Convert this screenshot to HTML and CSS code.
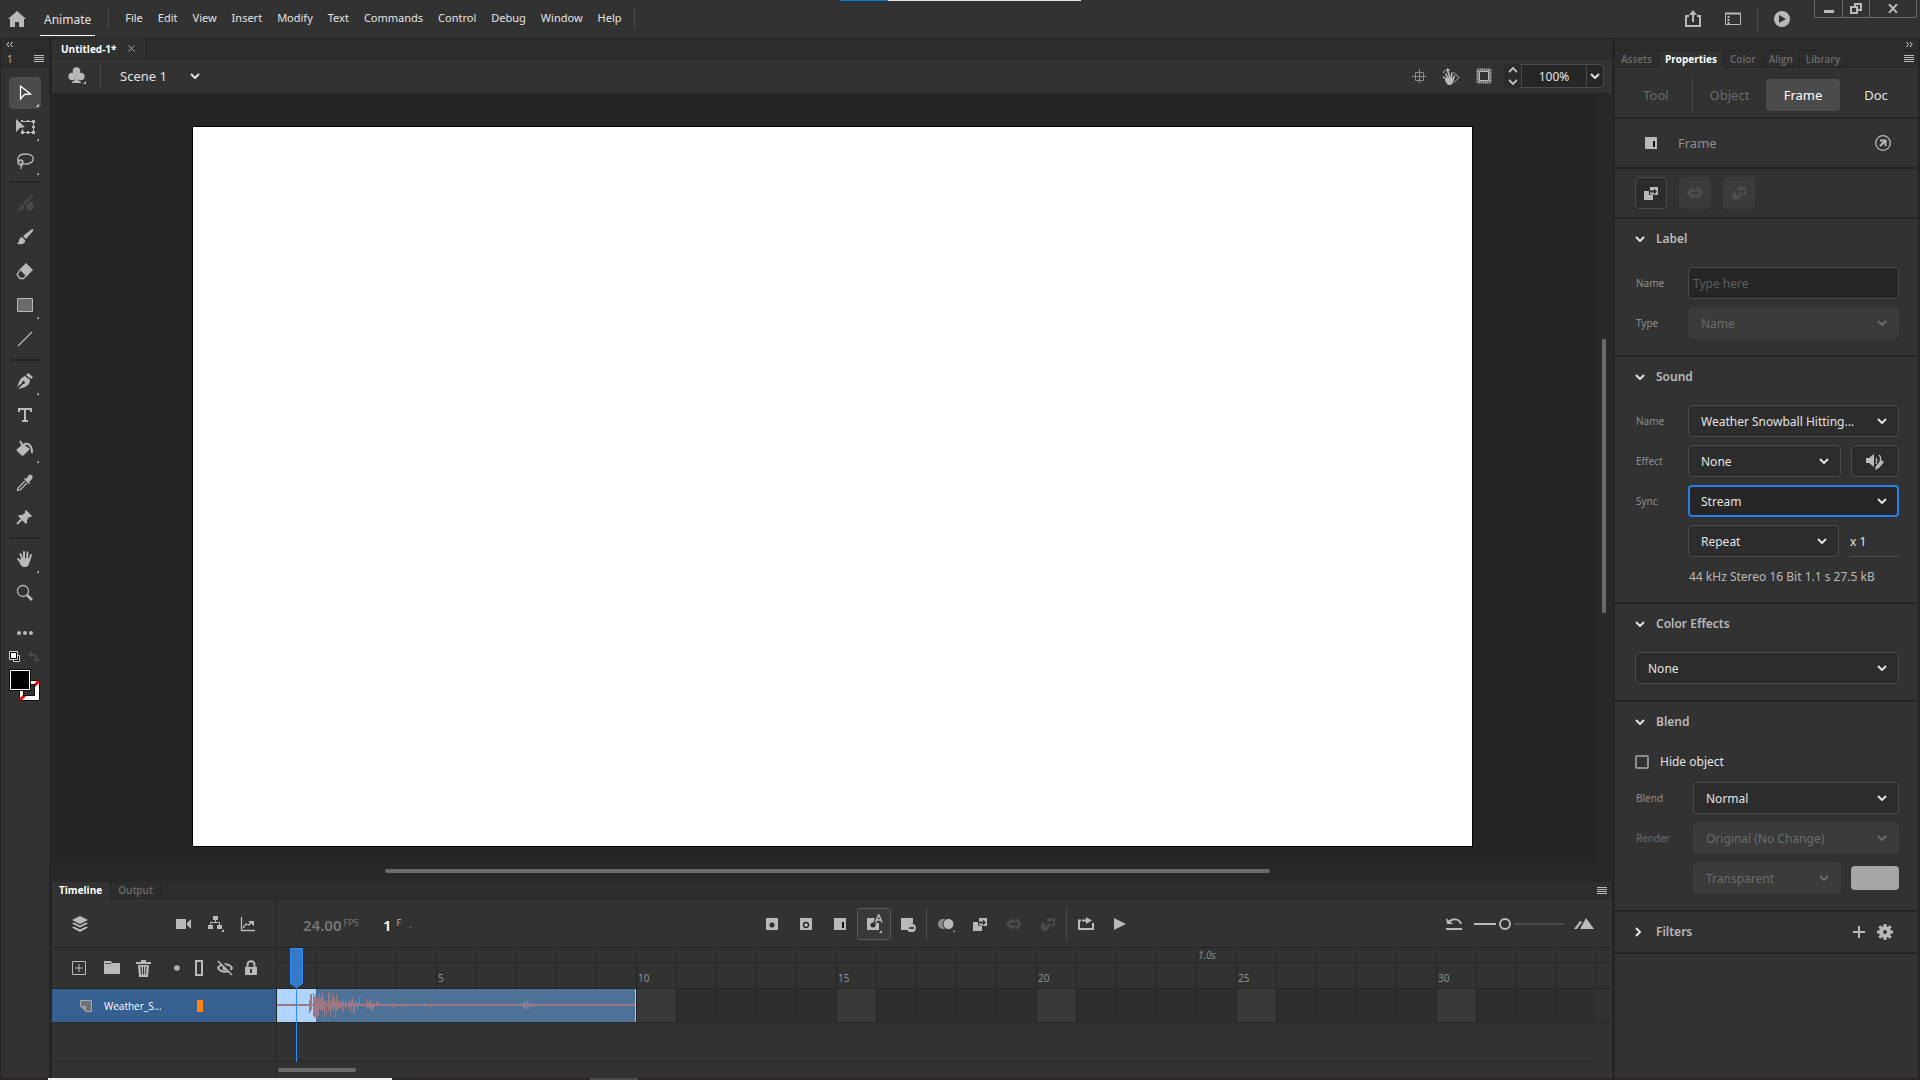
FILE: index.html
```html
<!DOCTYPE html>
<html lang="en">
<head>
<meta charset="utf-8">
<title>Untitled-1* - Animate</title>
<link rel="stylesheet" href="styles.css">
</head>
<body>
<svg class="defs" aria-hidden="true">
  <symbol id="chevron" viewBox="0 0 10 6"><path d="M1 1l4 4 4-4" fill="none" stroke="currentColor" stroke-width="2"/></symbol>
  <symbol id="burger" viewBox="0 0 10 7"><path d="M0 .5h10M0 2.5h10M0 4.5h10M0 6.5h10" stroke="currentColor"/></symbol>
  <symbol id="classic-tween" viewBox="0 0 16 16"><path fill="currentColor" d="M1 6h5v4h4v5H1z"/><path fill="currentColor" fill-rule="evenodd" d="M7 2h8v8h-4V9.500H7V7.500h4v2l3-3-3-3v2H7z"/></symbol>
  <symbol id="motion-tween" viewBox="0 0 16 16"><path fill="currentColor" fill-rule="evenodd" d="M5 2L0 8l5 6 3-3 3 3 5-6-5-6-3 3zM5 7h4V5l3 3-3 3V9H7v2L4 8l1-1z"/></symbol>
  <symbol id="shape-tween" viewBox="0 0 16 16"><path fill="currentColor" d="M5 6v4h4.600A4.500 4.500 0 1 1 5 6z"/><path fill="currentColor" fill-rule="evenodd" d="M7 2h8v8h-4V9.500H7V7.500h4v2l3-3-3-3v2H7z"/></symbol>
  <symbol id="frame-span" viewBox="0 0 16 16"><path fill="currentColor" fill-rule="evenodd" d="M2 2h12v12H2zM10 6h2v6h-2z"/><path fill="#111" d="M10 6h2v6h-2z"/></symbol>
</svg>

<div class="desktop-strip"></div>

<header class="app-bar">
  <button class="icon-btn home" aria-label="Home"><svg width="18" height="16" viewBox="0 0 18 16"><path fill="currentColor" d="M9 0l9 8h-2v8h-5v-5H7v5H2V8H0z"/></svg></button>
  <a class="app-name" href="#">Animate</a>
  <nav class="menu" aria-label="Main menu">
    <button>File</button><button>Edit</button><button>View</button><button>Insert</button><button>Modify</button><button>Text</button><button>Commands</button><button>Control</button><button>Debug</button><button>Window</button><button>Help</button>
  </nav>
  <div class="app-actions">
    <button class="icon-btn" aria-label="Share"><svg width="18" height="18" viewBox="0 0 18 18"><path d="M5 6H2v10h14V6h-3M9 12V2" fill="none" stroke="currentColor" stroke-width="2"/><path fill="currentColor" d="M9 0l4 5H5z"/></svg></button>
    <button class="icon-btn" aria-label="Workspace"><svg width="18" height="14" viewBox="0 0 18 14"><path d="M1.500 1.500h15v11h-15z" fill="none" stroke="currentColor"/><path d="M1 1.500h16" stroke="currentColor" stroke-width="2"/><path d="M4.500 4v8" stroke="currentColor" stroke-width="2" stroke-dasharray="2 1"/></svg></button>
    <span class="bar-rule"></span>
    <button class="icon-btn" aria-label="Test movie"><svg width="16" height="16" viewBox="0 0 16 16"><path fill="currentColor" fill-rule="evenodd" d="M8 0a8 8 0 1 0 0 16A8 8 0 0 0 8 0zM5 4l7 4-7 4z"/></svg></button>
  </div>
  <div class="window-buttons">
    <button aria-label="Minimize"><svg width="10" height="10" viewBox="0 0 10 10"><path d="M0 7.500h10" stroke="currentColor" stroke-width="3"/></svg></button>
    <button aria-label="Restore"><svg width="12" height="11" viewBox="0 0 12 11"><path d="M5 4V1h6v6H8M1 4h6v6H1z" fill="none" stroke="currentColor" stroke-width="2"/></svg></button>
    <button aria-label="Close"><svg width="10" height="9" viewBox="0 0 10 9"><path d="M1 0l8 9M9 0L1 9" stroke="currentColor" stroke-width="2"/></svg></button>
  </div>
</header>

<div class="workspace">
  <aside class="tools">
    <div class="collapse left"><svg width="7" height="5" viewBox="0 0 7 5"><path d="M3 0L1 2.500 3 5M6.500 0l-2 2.500 2 2.500" fill="none" stroke="currentColor"/></svg></div>
    <div class="tools-tab"><span>1</span><svg width="10" height="7"><use href="#burger"/></svg></div>
    <div class="tool-list">
      <button class="tool more active" aria-label="Selection"><svg width="20" height="20" viewBox="0 0 20 20"><path d="M5.500 3v13l4-4.500 6-.5z" fill="none" stroke="#fff" stroke-width="1.300"/></svg></button>
      <button class="tool more" aria-label="Free transform"><svg width="20" height="20" viewBox="0 0 20 20"><path fill="currentColor" d="M1 2l9 8-5 1-4 4z"/><path d="M7 4.500h11.500v11H7.500V12" fill="none" stroke="currentColor"/><path fill="currentColor" d="M6 3h2v2H6zM12 3h2v2h-2zM17 3h3v3h-3zM17 9h3v2h-3zM17 14h3v3h-3zM12 14h2v3h-2zM6 14h3v3H6z"/></svg></button>
      <button class="tool more" aria-label="Lasso"><svg width="18" height="18" viewBox="0 0 18 18"><g fill="none" stroke="currentColor" stroke-width="1.300"><path d="M4 11C-1 7 3 2 9 2s9 2 8 6-8 5-12 3"/><circle cx="4.500" cy="10.500" r="2.500"/><path d="M5 11c3 2-1 3 0 6"/></g></svg></button>
      <hr>
      <button class="tool" disabled aria-label="Fluid brush"><svg width="18" height="18" viewBox="0 0 18 18"><path fill="currentColor" d="M16 1L7 9l2 2 8-9zM6 10c-3 0-2 4-5 6 4 1 8 0 7-4zM10 11l5-4c3 3 3 6 2 8s-6 2-7-1z"/></svg></button>
      <button class="tool" aria-label="Brush"><svg width="18" height="18" viewBox="0 0 18 18"><path fill="currentColor" d="M16 1c2 0 1 2 1 2l-7 8-3-3zM6 9l3 3c1 4-4 5-8 4 3-2 1-6 5-7z"/></svg></button>
      <button class="tool" aria-label="Eraser"><svg width="18" height="18" viewBox="0 0 18 18"><path fill="currentColor" d="M10 1l7 7-6 6-7-7z"/><path d="M4.500 7.500l6 6-3 3H4l-3-4z" fill="none" stroke="currentColor" stroke-width="1.300"/></svg></button>
      <button class="tool more" aria-label="Rectangle"><svg width="18" height="16" viewBox="0 0 18 16"><path d="M1.500 1.500h15v13h-15z" fill="#6b6b6b" stroke="currentColor"/></svg></button>
      <button class="tool" aria-label="Line"><svg width="18" height="18" viewBox="0 0 18 18"><path d="M2 16L16 2" stroke="currentColor" stroke-width="1.300"/></svg></button>
      <hr>
      <button class="tool more" aria-label="Pen"><svg width="18" height="18" viewBox="0 0 18 18"><path fill="currentColor" d="M12 1l5 4-2 2-5-4zM9 4l5 4c0 4-3 7-8 8l-4 1 5-5a1.500 1.500 0 1 0-1-1l-5 4 2-5c1-3 3-5 6-6z"/></svg></button>
      <button class="tool" aria-label="Text"><svg width="16" height="16" viewBox="0 0 16 16"><path d="M2 5V2h12v3M8 2v12M5 14h6" fill="none" stroke="currentColor" stroke-width="2"/></svg></button>
      <button class="tool more" aria-label="Paint bucket"><svg width="18" height="18" viewBox="0 0 18 18"><path fill="currentColor" d="M7 4l7 5-6 6c-1 1-2 1-3 0l-4-4c-1-1 0-2 0-2z"/><path d="M4 1l4 7M7 5c5-3 9 0 9 8" fill="none" stroke="currentColor" stroke-width="2"/></svg></button>
      <button class="tool" aria-label="Eyedropper"><svg width="18" height="18" viewBox="0 0 18 18"><path fill="currentColor" d="M13 1c2-1 5 1 3 4l-3 3 1 1-1 1-5-5 1-1 1 1z"/><path d="M9 7l-7 7-.5 2.500L4 16l7-7" fill="none" stroke="currentColor" stroke-width="1.300"/></svg></button>
      <button class="tool" aria-label="Asset warp"><svg width="18" height="18" viewBox="0 0 18 18"><path fill="currentColor" d="M10 2l6 6-1 1h-2l-2 3v3l-1 1-8-8 1-1h3l3-2V3z"/><path d="M6 11l-5 5" stroke="currentColor" stroke-width="2"/></svg></button>
      <hr>
      <button class="tool more" aria-label="Hand"><svg width="18" height="18" viewBox="0 0 18 18"><path d="M4.500 4l2 6M8 2v8M11.500 2.500L11 10M15 5l-2 6M2 9l4 4" fill="none" stroke="currentColor" stroke-width="2" stroke-linecap="round"/><path fill="currentColor" d="M5 9l9-1c0 5-2 9-4 9H7c-2-1-4-5-4-6z"/></svg></button>
      <button class="tool" aria-label="Zoom"><svg width="18" height="18" viewBox="0 0 18 18"><circle cx="7" cy="7" r="5.500" fill="none" stroke="currentColor" stroke-width="1.300"/><path d="M11 11l5 5" stroke="currentColor" stroke-width="2.500"/></svg></button>
      <button class="tool extra" aria-label="Edit toolbar"><svg width="18" height="6" viewBox="0 0 18 6"><g fill="currentColor"><circle cx="3" cy="3" r="2"/><circle cx="9" cy="3" r="2"/><circle cx="15" cy="3" r="2"/></g></svg></button>
      <div class="swap-row">
        <button class="icon-btn" aria-label="Default colors"><svg width="12" height="12" viewBox="0 0 12 12"><path d="M4.500 4.500h6v6h-6z" fill="#000" stroke="#ccc"/><path d="M1.500 1.500h6v6h-6z" fill="#fff" stroke="#000"/><path d="M.5.5h8v8h-8z" fill="none" stroke="#ccc"/></svg></button>
        <button class="icon-btn dim" aria-label="Swap colors"><svg width="12" height="12" viewBox="0 0 12 12"><path d="M2 3.500c5 0 7 1 7 6" fill="none" stroke="currentColor" stroke-width="2"/><path fill="currentColor" d="M4 0v7L0 3.500zM5 8h7l-3.500 4z"/></svg></button>
      </div>
      <svg class="color-wells" width="32" height="34" viewBox="0 0 32 34"><path fill="#fff" stroke="#111" d="M10.500 11.500h20v20h-20z"/><path d="M11 31L30 12" stroke="#f00" stroke-width="3"/><path fill="#323232" stroke="#111" d="M14.500 15.500h11v11h-11z"/><path fill="#000" stroke="#111" d="M.5.500h21v21H.5z"/><path fill="#000" stroke="#fff" d="M1.500 1.500h19v19h-19z"/></svg>
    </div>
  </aside>

  <main class="document">
    <div class="doc-tabs"><div class="doc-tab"><span>Untitled-1*</span><button aria-label="Close document"><svg width="7" height="7" viewBox="0 0 7 7"><path d="M.5.500l6 6M6.500.5l-6 6" stroke="currentColor"/></svg></button></div></div>
    <div class="scene-bar">
      <button class="icon-btn club" aria-label="Edit symbols"><svg width="18" height="18" viewBox="0 0 18 18"><g fill="currentColor"><circle cx="8.500" cy="4" r="3.800"/><circle cx="4.200" cy="9.500" r="3.800"/><circle cx="12.800" cy="9.500" r="3.800"/><path d="M8 6h1l1 7 3 2v1H4v-1l3-2zM18 14v3h-3z"/></g></svg></button>
      <div class="scene-pick"><select aria-label="Scene"><option>Scene 1</option></select><svg width="10" height="6"><use href="#chevron"/></svg></div>
      <div class="stage-tools">
        <button class="icon-btn soft" aria-label="Center stage"><svg width="14" height="14" viewBox="0 0 14 14"><path d="M7.500 0v14M0 7.500h14M3.500 3.500h8v8h-8z" fill="none" stroke="currentColor"/></svg></button>
        <button class="icon-btn" aria-label="Rotate stage"><svg width="18" height="17" viewBox="0 0 18 17"><path d="M4 6l2 5M6.500 4.500L7.500 10M10 5l-1 6M1.500 9L5 12M12.500 8L11 11" stroke="currentColor" stroke-width="1.600" stroke-linecap="round"/><path fill="currentColor" d="M4 10h8c0 4-2 7-4 7H6c-1-1-3-4-3-5z"/><path d="M11.500 4l5.500 5.500-5 5M1.500 5c0-2 2-3 4-3" fill="none" stroke="currentColor"/><path fill="currentColor" d="M5 0l3 2-3 3z"/></svg></button>
        <button class="icon-btn" aria-label="Clip content"><svg width="16" height="16" viewBox="0 0 16 16"><path d="M2 2h12v12H2z" fill="none" stroke="#6f6f6f" stroke-width="3"/><path d="M2 2h12v12H2z" fill="none" stroke="#9a9a9a" stroke-width="3" stroke-dasharray="1 1"/><path d="M3.500 3.500h9v9h-9z" fill="#323232" stroke="#b9b9b9"/></svg></button>
        <div class="zoom-box">
          <button class="stepper" aria-label="Zoom step"><svg width="10" height="18" viewBox="0 0 10 18"><path d="M1 5l4-4 4 4M1 13l4 4 4-4" fill="none" stroke="currentColor" stroke-width="2"/></svg></button>
          <input aria-label="Zoom" value="100%">
          <button class="zoom-open" aria-label="Zoom levels"><svg width="10" height="6"><use href="#chevron"/></svg></button>
        </div>
      </div>
    </div>

    <div class="canvas">
      <div class="pasteboard"><div class="artboard"></div></div>
      <div class="track-v"><span></span></div>
      <div class="track-h"><span></span></div>
    </div>

    <section class="timeline" aria-label="Timeline">
      <div class="panel-tabs">
        <button class="on">Timeline</button><button>Output</button>
        <button class="panel-menu" aria-label="Panel menu"><svg width="10" height="7"><use href="#burger"/></svg></button>
      </div>
      <div class="tl-bar">
        <div class="tl-left">
          <button class="icon-btn layers" aria-label="Layer view"><svg width="16" height="16" viewBox="0 0 16 16"><path fill="currentColor" d="M8 0l8 4-8 4-8-4zM0 7.500L2 6.500l6 3 6-3 2 1-8 4zM0 11.500l2-1 6 3 6-3 2 1L8 16z"/></svg></button>
          <button class="icon-btn" aria-label="Add camera"><svg width="16" height="12" viewBox="0 0 16 12"><path fill="currentColor" d="M0 1h10v10H0zM11 5l4-4v10l-4-4z"/></svg></button>
          <button class="icon-btn" aria-label="Parenting view"><svg width="16" height="17" viewBox="0 0 16 17"><path fill="currentColor" d="M5 1h5v4H5zM0 10h5v4H0zM9 10h5v4H9zM16 14v3h-3z"/><path d="M7.500 5v2.500M2.500 10V7.500h9V10" fill="none" stroke="currentColor"/></svg></button>
          <button class="icon-btn" aria-label="Layer depth"><svg width="16" height="16" viewBox="0 0 16 16"><path d="M1.500 1v13.500H15M3 12l3-4 3 1 3-4" fill="none" stroke="currentColor" stroke-width="1.300"/><path fill="currentColor" d="M8 5h6v5z"/></svg></button>
        </div>
        <div class="tl-main">
          <div class="tl-time"><span class="fps">24.00<small>FPS</small></span><span class="frame-no">1<small>F</small></span><span class="tick">.</span></div>
          <div class="tl-keys">
            <button aria-label="Insert keyframe"><svg width="16" height="16" viewBox="0 0 16 16"><path fill="currentColor" d="M2 2h12v12H2z"/><circle cx="8" cy="9" r="2.500" fill="#2a2a2a"/></svg></button>
            <button aria-label="Insert blank keyframe"><svg width="16" height="16" viewBox="0 0 16 16"><path fill="currentColor" d="M2 2h12v12H2z"/><circle cx="8" cy="9" r="2.500" fill="none" stroke="#222" stroke-width="1.300"/></svg></button>
            <button aria-label="Insert frame"><svg width="16" height="16"><use href="#frame-span"/></svg></button>
            <button class="boxed" aria-label="Auto keyframe"><svg width="18" height="20" viewBox="0 0 18 20"><path fill="currentColor" d="M2 4h12v12H2z"/><circle cx="8" cy="11" r="2.500" fill="#2a2a2a"/><path fill="#3a3a3a" d="M11 0h7v11h-3l-1-2h-3l-1 2-2-1z"/><path d="M10.500 8.500L13.500 1h.5l3 7.500M12 6h4" fill="none" stroke="currentColor" stroke-width="1.500"/><path fill="currentColor" d="M17 16v3h-3z"/></svg></button>
            <button aria-label="Remove frames"><svg width="16" height="16" viewBox="0 0 16 16"><path fill="currentColor" d="M1 2h12v5l-3 1-2 3v3H1z"/><circle cx="11.500" cy="12" r="4.500" fill="currentColor"/><path d="M9 12h5" stroke="#222" stroke-width="1.500"/></svg></button>
            <i class="sep"></i>
            <button aria-label="Onion skin"><svg width="18" height="16" viewBox="0 0 18 16"><circle cx="6" cy="8" r="5" fill="#8c8c8c"/><circle cx="11.500" cy="8" r="5.500" fill="currentColor" stroke="#323232"/><path fill="currentColor" d="M18 14v2h-2z"/></svg></button>
            <button aria-label="Create classic tween"><svg width="16" height="16"><use href="#classic-tween"/></svg></button>
            <button disabled aria-label="Create motion tween"><svg width="16" height="16"><use href="#motion-tween"/></svg></button>
            <button disabled aria-label="Create shape tween"><svg width="16" height="16"><use href="#shape-tween"/></svg></button>
            <i class="sep"></i>
            <button aria-label="Loop"><svg width="18" height="16" viewBox="0 0 18 16"><path d="M4 4.500H2V13h14V7M5 4.500h6" fill="none" stroke="currentColor" stroke-width="2"/><path fill="currentColor" d="M9 1l6 3.500L9 8z"/></svg></button>
            <button aria-label="Play"><svg width="14" height="14" viewBox="0 0 14 14"><path fill="currentColor" d="M1 1l12 6-12 6z"/></svg></button>
          </div>
          <div class="tl-zoom">
            <button class="icon-btn reset" aria-label="Reset timeline zoom"><svg width="16" height="14" viewBox="0 0 16 14"><path d="M2 6c4-5 11-5 13 1" fill="none" stroke="currentColor" stroke-width="2"/><path fill="currentColor" d="M0 1l1 6h6zM0 11h16v2H0z"/></svg></button>
            <input type="range" min="0" max="100" value="32" aria-label="Timeline zoom">
            <button class="icon-btn" aria-label="Resize timeline"><svg width="20" height="12" viewBox="0 0 20 12"><path fill="currentColor" d="M12 0l8 11H6zM6 3l2 1-5 7H0z"/></svg></button>
          </div>
        </div>
      </div>
      <div class="tl-head">
        <div class="tl-left layer-tools">
          <button class="icon-btn" aria-label="New layer"><svg width="14" height="14" viewBox="0 0 14 14"><path d="M.5.500h13v13H.5zM7 3v8M3 7h8" fill="none" stroke="currentColor"/></svg></button>
          <button class="icon-btn" aria-label="New folder"><svg width="16" height="14" viewBox="0 0 16 14"><path fill="currentColor" d="M0 0h7l1 2h8v11H0z"/><path d="M1 2.500h6" stroke="#555"/></svg></button>
          <button class="icon-btn" aria-label="Delete layer"><svg width="16" height="17" viewBox="0 0 16 17"><path fill="currentColor" d="M0 2h15v2H0zM5 0h5v2H5zM2 5h11l-1 12H3z"/><path d="M5 6.500l.5 8M7.500 6.500v8M10 6.500l-.5 8" stroke="#323232"/></svg></button>
          <button class="icon-btn" aria-label="Highlight"><svg width="6" height="6" viewBox="0 0 6 6"><circle cx="3" cy="3" r="2.800" fill="currentColor"/></svg></button>
          <button class="icon-btn" aria-label="Outline"><svg width="8" height="16" viewBox="0 0 8 16"><path d="M1 1h6v14H1z" fill="none" stroke="currentColor" stroke-width="2"/></svg></button>
          <button class="icon-btn" aria-label="Hide layers"><svg width="16" height="16" viewBox="0 0 16 16"><path d="M1 8c3-5 11-5 14 0-3 5-11 5-14 0z" fill="none" stroke="currentColor" stroke-width="2"/><circle cx="8" cy="8" r="2.500" fill="currentColor"/><path d="M2 0l14 14" stroke="#323232" stroke-width="2"/><path d="M1 1l14 14" stroke="currentColor" stroke-width="1.500"/></svg></button>
          <button class="icon-btn" aria-label="Lock layers"><svg width="12" height="16" viewBox="0 0 12 16"><path fill="currentColor" fill-rule="evenodd" d="M0 7h12v8H0zM5 9v4h2V9z"/><path d="M2.500 7V5c0-5 7-5 7 0v2" fill="none" stroke="currentColor" stroke-width="2"/></svg></button>
        </div>
        <div class="ruler">
          <div class="seconds"><span>1.0s</span></div>
          <ol class="frames"><li>5</li><li>10</li><li>15</li><li>20</li><li>25</li><li>30</li></ol>
        </div>
      </div>
      <div class="tl-row">
        <div class="tl-left layer-name">
          <svg width="12" height="12" viewBox="0 0 12 12"><path d="M.5.500h11v11H6L.5 6z" fill="#6f7275" stroke="#aaa"/><path d="M0 6h6v6" fill="#9c9c9c"/></svg>
          <span>Weather_S...</span><i></i>
        </div>
        <div class="lane">
          <svg class="clip" width="359" height="33" viewBox="0 0 359 33" aria-label="Audio waveform">
            <path fill="#4e7197" d="M39 0h319v33H39z"/><path fill="#b0d4fb" d="M0 0h39v33H0z"/><path fill="#b5d66a" d="M358 0h1v33h-1z"/>
            <path stroke="#2b4a6b" d="M78 1.500h1M118 1.500h1M158 1.500h1M198 1.500h1M238 1.500h1M278 1.500h1M318 1.500h1"/>
            <path fill="#9c7985" d="M0 15h358v2H0z"/>
            <path stroke="#9c7985" d="M32.500 11v13M33.500 5v18M34.500 5v16M36.500 4v23M37.500 8v21M38.500 5v23M39.500 7v22M40.500 10v17M41.500 9v18M42.500 4v16M43.500 10v12M44.500 7v13M45.500 3v19M46.500 8v12M47.500 12v16M49.500 11v15M51.500 3v20M52.500 4v16M53.500 12v16M54.500 13v7M55.500 4v18M56.500 8v12M57.500 9v9M58.500 13v16M59.500 5v17M60.500 10v10M61.500 12v8M62.500 14v5M63.500 11v8M64.500 13v5M65.500 14v9M66.500 10v11M68.500 11v7M69.500 14v6M71.500 12v6M72.500 12v8M73.500 14v9M74.500 11v7M75.500 8v9M76.500 13v12M77.500 14v9M78.500 12v6M80.500 13v8M81.500 14v3M82.500 8v9M86.500 14v4M89.500 10v10M90.500 12v6M91.500 14v4M92.500 12v8M93.500 11v9M94.500 15v7M95.500 14v7M96.500 14v5M99.500 12v5M100.500 13v4M101.500 13v5M108.500 14v3M112.500 14v3M115.500 14v3M117.500 15v4M125.500 15v4M129.500 14v3M153.500 15v4M246.500 13v5M247.500 14v6M248.500 12v8M250.500 11v9M252.500 13v7M255.500 14v4M256.500 15v3"/>
          </svg>
        </div>
      </div>
      <div class="tl-empty"><div class="tl-left"></div></div>
      <div class="tl-scroll"><div class="tl-left"></div><span></span></div>
      <svg class="playhead" width="14" height="114" viewBox="0 0 14 114"><path fill="#377bc8" stroke="#2f8bf5" d="M.5.500h12v35l-6 4-6-4z"/><path stroke="#2f8bf5" d="M6.500 39v75"/></svg>
    </section>
  </main>

  <aside class="props">
    <div class="collapse right"><svg width="7" height="5" viewBox="0 0 7 5"><path d="M.5 0l2 2.500-2 2.500M4 0l2 2.500L4 5" fill="none" stroke="currentColor"/></svg></div>
    <div class="panel-tabs">
      <button>Assets</button><button class="on">Properties</button><button>Color</button><button>Align</button><button>Library</button>
      <button class="panel-menu" aria-label="Panel menu"><svg width="10" height="7"><use href="#burger"/></svg></button>
    </div>
    <div class="modes"><button disabled>Tool</button><button disabled>Object</button><button class="on">Frame</button><button>Doc</button></div>
    <div class="kind">
      <svg width="16" height="16"><use href="#frame-span"/></svg><span>Frame</span>
      <button class="icon-btn" aria-label="Quick share"><svg width="16" height="16" viewBox="0 0 16 16"><circle cx="8" cy="8" r="7.300" fill="none" stroke="currentColor" stroke-width="1.300"/><path d="M5 11l5-5M5 5.500h5.500V11" fill="none" stroke="currentColor" stroke-width="2"/></svg></button>
    </div>
    <div class="tweens">
      <button aria-label="Create classic tween"><svg width="16" height="16"><use href="#classic-tween"/></svg></button>
      <button disabled aria-label="Create motion tween"><svg width="16" height="16"><use href="#motion-tween"/></svg></button>
      <button disabled aria-label="Create shape tween"><svg width="16" height="16"><use href="#shape-tween"/></svg></button>
    </div>

    <section class="group">
      <h2><svg width="10" height="6"><use href="#chevron"/></svg>Label</h2>
      <div class="field"><label for="label-name">Name</label><input id="label-name" placeholder="Type here"></div>
      <div class="field"><label for="label-type">Type</label><div class="pick"><select id="label-type" disabled><option>Name</option></select><svg width="10" height="6"><use href="#chevron"/></svg></div></div>
    </section>

    <section class="group">
      <h2><svg width="10" height="6"><use href="#chevron"/></svg>Sound</h2>
      <div class="field"><label for="snd-name">Name</label><div class="pick"><select id="snd-name"><option>Weather Snowball Hitting...</option></select><svg width="10" height="6"><use href="#chevron"/></svg></div></div>
      <div class="field"><label for="snd-effect">Effect</label><div class="pick"><select id="snd-effect"><option>None</option></select><svg width="10" height="6"><use href="#chevron"/></svg></div>
        <button class="side" aria-label="Edit sound envelope"><svg width="18" height="17" viewBox="0 0 18 17"><path fill="currentColor" d="M0 5h3l5-4v13l-5-4H0zM9 17l1-4 5-6 3 2-5 6z"/><path d="M10 5c1 2 1 4 0 6M13 2c2 2 2 4 1 6" fill="none" stroke="currentColor" stroke-width="1.300"/></svg></button></div>
      <div class="field"><label for="snd-sync">Sync</label><div class="pick focus"><select id="snd-sync"><option>Stream</option></select><svg width="10" height="6"><use href="#chevron"/></svg></div></div>
      <div class="field unlabelled"><div class="pick"><select aria-label="Loop mode"><option>Repeat</option></select><svg width="10" height="6"><use href="#chevron"/></svg></div><input class="times" aria-label="Repeat count" value="x 1"></div>
      <p class="info">44 kHz Stereo 16 Bit 1.1 s 27.5 kB</p>
    </section>

    <section class="group">
      <h2><svg width="10" height="6"><use href="#chevron"/></svg>Color Effects</h2>
      <div class="field"><div class="pick"><select aria-label="Color effect"><option>None</option></select><svg width="10" height="6"><use href="#chevron"/></svg></div></div>
    </section>

    <section class="group blend">
      <h2><svg width="10" height="6"><use href="#chevron"/></svg>Blend</h2>
      <label class="check"><input type="checkbox">Hide object</label>
      <div class="field"><label for="bl-mode">Blend</label><div class="pick"><select id="bl-mode"><option>Normal</option></select><svg width="10" height="6"><use href="#chevron"/></svg></div></div>
      <div class="field"><label for="bl-render" class="off">Render</label><div class="pick"><select id="bl-render" disabled><option>Original (No Change)</option></select><svg width="10" height="6"><use href="#chevron"/></svg></div></div>
      <div class="field unlabelled"><div class="pick"><select aria-label="Background" disabled><option>Transparent</option></select><svg width="10" height="6"><use href="#chevron"/></svg></div><button class="swatch" disabled aria-label="Background color"></button></div>
    </section>

    <section class="group filters">
      <h2><svg class="shut" width="6" height="10" viewBox="0 0 6 10"><path d="M1 1l4 4-4 4" fill="none" stroke="currentColor" stroke-width="2"/></svg>Filters</h2>
      <button class="icon-btn" aria-label="Add filter"><svg width="12" height="12" viewBox="0 0 12 12"><path d="M6 0v12M0 6h12" stroke="currentColor" stroke-width="2"/></svg></button>
      <button class="icon-btn" aria-label="Filter options"><svg width="16" height="16" viewBox="0 0 16 16"><circle cx="8" cy="8" r="4" fill="none" stroke="currentColor" stroke-width="4"/><path d="M8 0v3M8 13v3M0 8h3M13 8h3M2.300 2.300l2 2M11.700 11.700l2 2M2.300 13.700l2-2M11.700 4.300l2-2" stroke="currentColor" stroke-width="3"/></svg></button>
    </section>
  </aside>
</div>

<footer class="taskbar"><i class="light"></i><i class="mid"></i></footer>
</body>
</html>
```

FILE: styles.css
```css
:root {
  --panel: #323232;
  --tabs: #2d2d2d;
  --line: #252525;
  --icon: #b9b9b9;
  --text: #e3e3e3;
  --dim: #6b6b6b;
  --edge: #4b4b4b;
}

* { box-sizing: border-box; }

body {
  margin: 0;
  height: 100vh;
  display: flex;
  flex-direction: column;
  overflow: hidden;
  background: var(--line);
  color: var(--text);
  font: 12px/16px "Noto Sans", "Open Sans", sans-serif;
}

button, input, select {
  font: inherit;
  color: inherit;
  margin: 0;
  padding: 0;
  border: 0;
  background: none;
  border-radius: 0;
}

select { appearance: none; opacity: 1; }
svg { display: block; flex: none; }
.defs { position: absolute; width: 0; height: 0; }

.icon-btn {
  display: flex;
  align-items: center;
  justify-content: center;
  color: var(--icon);
}
.icon-btn.dim { color: #4a4a4a; }
.icon-btn.soft { color: #8a8a8a; }

.desktop-strip {
  position: absolute;
  top: 0;
  left: 840px;
  width: 241px;
  height: 1px;
  background: linear-gradient(90deg, #0078d7 48px, #e4e4e0 48px);
}

/* Application bar */
.app-bar {
  flex: none;
  display: flex;
  height: 38px;
  background: var(--panel);
}
.home { padding: 0 0 0 8px; }
.app-name {
  margin-left: 14px;
  padding: 12px 4px 0;
  height: 36px;
  border-bottom: 1px solid #fff;
  color: var(--text);
  text-decoration: none;
}
.menu {
  display: flex;
  gap: 15px;
  height: 20px;
  margin: 8px 0 0 13px;
  padding: 0 12px 0 16px;
  border: solid var(--edge);
  border-width: 0 1px;
  font-size: 11px;
}
.app-actions {
  display: flex;
  align-items: center;
  gap: 22px;
  margin-left: auto;
  padding-right: 24px;
}
.app-actions .icon-btn:last-child { margin-left: -6px; }
.bar-rule { width: 1px; height: 24px; margin-left: -7px; background: var(--edge); }
.window-buttons {
  display: flex;
  height: 18px;
  margin-right: 3px;
  border: solid #6a6a6a;
  border-width: 0 1px 1px;
  border-radius: 0 0 3px 3px;
  color: var(--icon);
}
.window-buttons button {
  display: grid;
  place-items: center;
  width: 27px;
}
.window-buttons button + button { border-left: 1px solid #6a6a6a; }
.window-buttons button:last-child { width: 47px; }

/* Workspace */
.workspace {
  flex: 1;
  min-height: 0;
  display: grid;
  grid-template-columns: 48px 1fr 303px;
  column-gap: 3px;
  padding: 1px 2px 0 1px;
}

.collapse {
  display: flex;
  align-items: center;
  height: 11px;
  padding: 0 5px;
  background: var(--tabs);
  color: #ddd;
}
.collapse.right { justify-content: flex-end; }

/* Tools */
.tools { background: var(--panel); }
.tools-tab {
  display: flex;
  align-items: center;
  justify-content: space-between;
  height: 17px;
  padding: 0 5px 0 6px;
  border: solid var(--line);
  border-width: 1px 0;
  background: var(--tabs);
  color: #b9b9b9;
  font-size: 10px;
}
.tool-list { display: flex; flex-direction: column; padding: 9px 8px 0; }
.tool {
  position: relative;
  display: grid;
  place-items: center;
  height: 32px;
  margin: 1px 0;
  border-radius: 4px;
  color: var(--icon);
}
.tool.active { background: var(--edge); }
.tool:disabled { color: #484848; }
.tool.extra { margin-top: 7px; }
.tool.more::after {
  content: "";
  position: absolute;
  right: 2px;
  bottom: 2px;
  width: 3px;
  height: 3px;
  background: linear-gradient(135deg, transparent 50%, var(--icon) 50%);
}
.tool-list hr {
  width: 30px;
  height: 2px;
  margin: 3px 1px;
  border: 0;
  background: var(--line);
}
.swap-row { display: flex; justify-content: space-between; margin: 1px 1px 6px 0; }

/* Document */
.document { display: flex; flex-direction: column; min-width: 0; }
.doc-tabs { display: flex; background: var(--tabs); height: 19px; }
.doc-tab {
  display: flex;
  align-items: center;
  gap: 11px;
  padding: 0 11px 0 9px;
  border-right: 1px solid var(--line);
  background: #303030;
  font: 700 10px/16px "Open Sans", "Noto Sans", sans-serif;
  color: #fff;
}
.doc-tab button { color: #aaa; }
.scene-bar {
  display: flex;
  align-items: center;
  height: 34px;
  margin-top: 1px;
  padding: 0 8px 0 16px;
  background: var(--panel);
}
.scene-pick {
  display: grid;
  align-items: center;
  width: 100px;
  height: 24px;
  margin-left: 14px;
  padding-left: 19px;
  border-left: 1px solid var(--edge);
  font-size: 13px;
}
.scene-pick select, .scene-pick svg { grid-area: 1 / 1; }
.scene-pick select { height: 24px; }
.scene-pick svg { justify-self: end; pointer-events: none; }
.stage-tools { display: flex; align-items: center; gap: 16px; margin-left: auto; }
.zoom-box { display: flex; height: 24px; margin-left: -4px; }
.stepper { display: grid; place-items: center; width: 17px; background: #2a2a2a; color: var(--icon); }
.zoom-box input {
  width: 66px;
  padding-top: 1px;
  border: 1px solid var(--edge);
  background: #262626;
  text-align: center;
}
.zoom-open {
  display: grid;
  place-items: center;
  width: 17px;
  border: 1px solid var(--edge);
  border-left: 0;
  border-radius: 0 4px 4px 0;
  background: #262626;
}

.canvas {
  flex: 1;
  min-height: 0;
  display: grid;
  grid-template: 1fr 19px / 1fr 16px;
  background: #252525;
}
.pasteboard { display: grid; padding: 33px 123px 16px 140px; }
.artboard { background: #fff; border: 1px solid #000; }
.track-v, .track-h { display: grid; background: #282828; }
.track-v { grid-template-rows: 246fr 274fr 250fr; }
.track-h { grid-column: 1 / 3; grid-template-columns: 333fr 885fr 342fr; }
.track-v span { grid-row: 2; width: 4px; margin-left: 6px; border-radius: 2px; background: #6b6b6b; }
.track-h span { grid-column: 2; height: 4px; margin-top: 6px; border-radius: 2px; background: #6b6b6b; }

/* Docked panel tabs */
.panel-tabs {
  display: flex;
  height: 17px;
  background: var(--tabs);
  border-bottom: 1px solid var(--line);
  font: 600 10px/14px "Open Sans", "Noto Sans", sans-serif;
}
.panel-tabs button {
  height: 17px;
  padding: 0 8px 2px 7px;
  border-right: 1px solid var(--line);
  color: var(--dim);
}
.panel-tabs .on { background: var(--panel); color: #fff; font-weight: 700; }
.panel-tabs .panel-menu {
  display: grid;
  place-items: center;
  margin-left: auto;
  padding: 0 5px 1px 0;
  border: 0;
  color: var(--icon);
}
.props .panel-tabs { height: 18px; border-top: 1px solid var(--line); }
.props .panel-tabs button { padding: 0 6px 2px; }
.props .panel-tabs .panel-menu { padding: 0 4px 3px 0; }

/* Timeline */
.timeline { position: relative; background: var(--panel); }
.tl-left { flex: none; width: 225px; border-right: 1px solid var(--line); }
.tl-bar, .tl-head, .tl-row, .tl-empty, .tl-scroll { display: flex; border-bottom: 1px solid var(--line); }
.tl-bar { height: 49px; padding-top: 1px; }
.tl-bar .tl-left { display: flex; align-items: center; gap: 16px; padding: 0 20px; }
.tl-bar .layers { margin-right: auto; }
.tl-main {
  flex: 1;
  display: grid;
  grid-template-columns: 1fr auto 1fr;
  align-items: center;
  padding: 0 18px 0 20px;
}
.tl-time { display: flex; align-items: center; padding-left: 6px; font-weight: 600; font-size: 15px; line-height: 20px; }
.tl-time small { font-weight: 400; font-size: 9px; vertical-align: 5px; margin-left: 2px; }
.fps { width: 80px; color: #777; }
.frame-no { width: 26px; color: #fff; }
.frame-no small { margin-left: 5px; color: var(--icon); }
.tick { font-size: 10px; font-weight: 400; line-height: 16px; color: #888; }
.tl-keys { display: flex; }
.tl-keys button {
  display: grid;
  place-items: center;
  width: 34px;
  height: 32px;
  color: var(--icon);
}
.tl-keys button:disabled { color: var(--edge); }
.tl-keys .boxed { border: 1px solid #5a5a5a; border-radius: 3px; background: #3a3a3a; }
.tl-keys .sep { width: 1px; margin: 0 2px 0 1px; background: var(--edge); }
.tl-zoom { display: flex; align-items: center; justify-content: flex-end; gap: 10px; }
.tl-zoom .reset { margin-right: 2px; }
.tl-zoom input { appearance: none; width: 90px; height: 14px; }
.tl-zoom input::-webkit-slider-runnable-track {
  height: 12px;
  background: linear-gradient(90deg, var(--icon) 22px, transparent 22px 40px, var(--edge) 40px) center / 100% 2px no-repeat;
}
.tl-zoom input::-webkit-slider-thumb {
  appearance: none;
  width: 12px;
  height: 12px;
  border: 2px solid var(--icon);
  border-radius: 50%;
}

.tl-head { height: 41px; }
.layer-tools { display: flex; align-items: center; padding-left: 20px; }
.layer-tools .icon-btn { margin-right: 17px; }
.layer-tools .icon-btn:nth-child(1) { margin-right: 18px; }
.layer-tools .icon-btn:nth-child(2) { margin-right: 16px; }
.layer-tools .icon-btn:nth-child(3) { margin-right: 22px; }
.layer-tools .icon-btn:nth-child(4) { margin-right: 15px; }
.layer-tools .icon-btn:nth-child(5) { margin-right: 14px; }
.layer-tools .icon-btn:nth-child(6) { margin-right: 12px; }
.layer-tools .icon-btn:last-child { margin-right: 0; }
.ruler {
  flex: 1;
  overflow: hidden;
  background: repeating-linear-gradient(90deg, transparent 0 39px, var(--line) 39px 40px);
  color: #8f8f8f;
  font-size: 10px;
}
.seconds {
  height: 15px;
  padding-left: 921px;
  border-bottom: 1px solid var(--line);
  font: italic 10px/14px "Open Sans", "Noto Sans", sans-serif;
}
.frames { display: flex; margin: 0; padding: 7px 0 0 161px; list-style: none; }
.frames li { flex: 0 0 200px; }

.tl-row { height: 34px; }
.tl-row .tl-left { border-right-color: #222; }
.layer-name {
  display: flex;
  align-items: center;
  padding-left: 28px;
  background: #35608f;
  color: #fff;
  font: 10px/16px "Open Sans", "Noto Sans", sans-serif;
}
.layer-name span { margin-left: 12px; width: 93px; }
.layer-name i { width: 6px; height: 12px; background: #ff8410; }
.lane {
  flex: 1;
  margin-right: 16px;
  background:
    repeating-linear-gradient(90deg, transparent 0 39px, var(--line) 39px 40px),
    repeating-linear-gradient(90deg, #2e2e2e 0 160px, #393939 160px 200px);
}
.tl-empty { height: 39px; margin-right: 16px; }
.tl-scroll { height: 16px; border: 0; align-items: stretch; }
.tl-scroll span { width: 78px; height: 4px; margin: 6px 0 0 1px; border-radius: 2px; background: #6b6b6b; }
.playhead { position: absolute; left: 238px; top: 66px; pointer-events: none; }

/* Properties */
.props { background: var(--panel); }
.modes {
  display: grid;
  grid-template-columns: 78px 73px 74px 1fr;
  height: 51px;
  padding: 11px 6px 6px 0;
  border-bottom: 2px solid var(--line);
  font-size: 13px;
}
.modes button { height: 32px; }
.modes button:disabled { color: var(--dim); }
.modes button:first-child { padding-left: 5px; border-right: 1px solid var(--edge); }
.modes .on { background: var(--edge); border-radius: 4px; color: #fff; }
.kind {
  display: flex;
  align-items: center;
  height: 50px;
  padding: 0 27px 0 28px;
  border-bottom: 2px solid var(--line);
  color: #8f8f8f;
  font-size: 13px;
}
.kind > svg { color: var(--icon); }
.kind span { margin-left: 19px; }
.kind button { margin-left: auto; }
.tweens { display: flex; gap: 12px; padding: 8px 20px; border-bottom: 2px solid var(--line); }
.tweens button {
  display: grid;
  place-items: center;
  width: 32px;
  height: 32px;
  border: 1px solid var(--edge);
  border-radius: 4px;
  background: #2c2c2c;
  color: var(--icon);
}
.tweens button:disabled { border-color: #3b3b3b; background: #3b3b3b; color: #4d4d4d; }

.group {
  display: flex;
  flex-direction: column;
  gap: 8px;
  padding: 0 19px 16px 20px;
  border-bottom: 2px solid var(--line);
}
.group h2 {
  display: flex;
  align-items: center;
  gap: 11px;
  height: 40px;
  margin: 0;
  font-size: 12px;
  font-weight: 600;
  color: var(--icon);
}
.group h2 svg { color: var(--text); }
.group h2 .shut { margin-right: 4px; }
.field { display: flex; align-items: center; gap: 10px; }
.field label { width: 43px; padding-left: 1px; color: #8f8f8f; font-size: 10px; }
.blend .field label { width: 48px; }
.field label.off { color: var(--dim); }
.field.unlabelled { padding-left: 53px; }
.blend .field.unlabelled { padding-left: 58px; }
.field input {
  flex: 1;
  min-width: 0;
  height: 32px;
  padding: 1px 4px 0;
  border: 1px solid var(--edge);
  border-radius: 4px;
  background: #262626;
}
.field input::placeholder { color: #5c5c5c; }
.pick { flex: 1; display: grid; align-items: center; min-width: 0; }
.pick select {
  grid-area: 1 / 1;
  width: 100%;
  height: 32px;
  padding: 1px 12px 0;
  border: 1px solid var(--edge);
  border-radius: 4px;
  background: #2c2c2c;
}
.pick svg { grid-area: 1 / 1; justify-self: end; margin-right: 12px; pointer-events: none; }
.pick select:disabled { border-color: #3b3b3b; background: #3b3b3b; color: var(--dim); }
.pick select:disabled + svg { color: var(--dim); }
.pick.focus select { padding: 1px 11px 0; border: 2px solid #2680eb; background: #262626; }
.side {
  display: grid;
  place-items: center;
  width: 48px;
  height: 32px;
  border: 1px solid var(--edge);
  border-radius: 4px;
  background: #2c2c2c;
  color: var(--icon);
}
.field .times {
  flex: none;
  width: 50px;
  padding: 2px 1px 0;
  border-width: 0 0 1px;
  border-radius: 0;
  background: none;
}
.info { margin: 2px 0 0 54px; line-height: 19px; color: var(--icon); white-space: nowrap; }
.check { display: flex; align-items: center; gap: 11px; height: 24px; }
.check input {
  appearance: none;
  width: 14px;
  height: 14px;
  border: 2px solid #8f8f8f;
  border-radius: 2px;
}
.swatch { width: 48px; height: 24px; border-radius: 4px; background: #a6a6a6; }
.filters { flex-direction: row; gap: 12px; padding: 0 25px 0 20px; }
.filters h2 { flex: 1; }

/* Slice of the desktop below the window */
.taskbar { flex: none; display: flex; height: 2px; padding-left: 48px; background: #2a2329; }
.taskbar .light { width: 344px; background: #f2f2f2; }
.taskbar .mid { width: 48px; margin-left: 198px; background: #4d494c; }
```
